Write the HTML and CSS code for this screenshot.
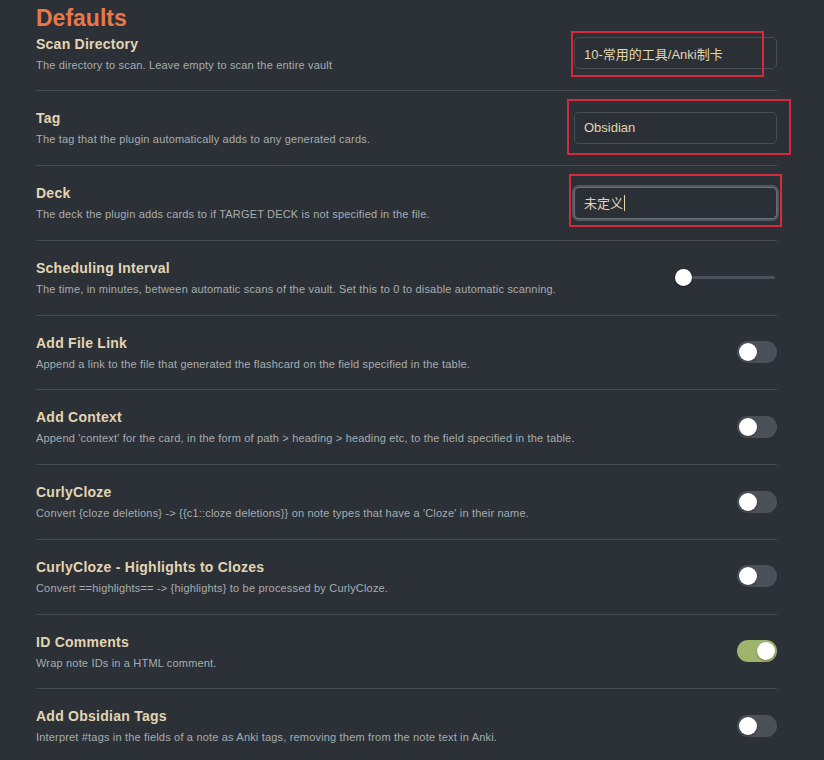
FILE: index.html
```html
<!DOCTYPE html>
<html lang="zh">
<head>
    <meta charset="UTF-8">
    <meta name="viewport" content="width=device-width, initial-scale=1.0">
    <title>Obsidian to Anki - Defaults</title>
    <link rel="stylesheet" href="styles.css">
</head>
<body>
    <div class="settings">
        <h2 class="settings-heading">Defaults</h2>

        <div class="setting-item first">
            <div class="setting-info">
                <div class="setting-name">Scan Directory</div>
                <div class="setting-desc">The directory to scan. Leave empty to scan the entire vault</div>
            </div>
            <div class="setting-control">
                <div class="text-field">10-常用的工具/Anki制卡</div>
                <span class="mark mark-1"></span>
            </div>
        </div>

        <div class="setting-item">
            <div class="setting-info">
                <div class="setting-name">Tag</div>
                <div class="setting-desc">The tag that the plugin automatically adds to any generated cards.</div>
            </div>
            <div class="setting-control">
                <div class="text-field">Obsidian</div>
                <span class="mark mark-2"></span>
            </div>
        </div>

        <div class="setting-item">
            <div class="setting-info">
                <div class="setting-name">Deck</div>
                <div class="setting-desc">The deck the plugin adds cards to if TARGET DECK is not specified in the file.</div>
            </div>
            <div class="setting-control">
                <div class="text-field focused">未定义<span class="caret"></span></div>
                <span class="mark mark-3"></span>
            </div>
        </div>

        <div class="setting-item">
            <div class="setting-info">
                <div class="setting-name">Scheduling Interval</div>
                <div class="setting-desc">The time, in minutes, between automatic scans of the vault. Set this to 0 to disable automatic scanning.</div>
            </div>
            <div class="setting-control">
                <div class="slider"><span class="slider-thumb"></span></div>
            </div>
        </div>

        <div class="setting-item">
            <div class="setting-info">
                <div class="setting-name">Add File Link</div>
                <div class="setting-desc">Append a link to the file that generated the flashcard on the field specified in the table.</div>
            </div>
            <div class="setting-control">
                <div class="toggle"><span class="knob"></span></div>
            </div>
        </div>

        <div class="setting-item">
            <div class="setting-info">
                <div class="setting-name">Add Context</div>
                <div class="setting-desc">Append 'context' for the card, in the form of path &gt; heading &gt; heading etc, to the field specified in the table.</div>
            </div>
            <div class="setting-control">
                <div class="toggle"><span class="knob"></span></div>
            </div>
        </div>

        <div class="setting-item">
            <div class="setting-info">
                <div class="setting-name">CurlyCloze</div>
                <div class="setting-desc">Convert {cloze deletions} -&gt; {{c1::cloze deletions}} on note types that have a 'Cloze' in their name.</div>
            </div>
            <div class="setting-control">
                <div class="toggle"><span class="knob"></span></div>
            </div>
        </div>

        <div class="setting-item">
            <div class="setting-info">
                <div class="setting-name">CurlyCloze - Highlights to Clozes</div>
                <div class="setting-desc">Convert ==highlights== -&gt; {highlights} to be processed by CurlyCloze.</div>
            </div>
            <div class="setting-control">
                <div class="toggle"><span class="knob"></span></div>
            </div>
        </div>

        <div class="setting-item">
            <div class="setting-info">
                <div class="setting-name">ID Comments</div>
                <div class="setting-desc">Wrap note IDs in a HTML comment.</div>
            </div>
            <div class="setting-control">
                <div class="toggle on"><span class="knob"></span></div>
            </div>
        </div>

        <div class="setting-item">
            <div class="setting-info">
                <div class="setting-name">Add Obsidian Tags</div>
                <div class="setting-desc">Interpret #tags in the fields of a note as Anki tags, removing them from the note text in Anki.</div>
            </div>
            <div class="setting-control">
                <div class="toggle"><span class="knob"></span></div>
            </div>
        </div>
    </div>
</body>
</html>
```

FILE: styles.css
```css
body {
    margin: 0;
    background-color: #2c3137;
    font-family: "Liberation Sans", "Noto Sans CJK SC", sans-serif;
}
.settings {
    padding: 0 47px 0 36px;
}
.settings-heading {
    margin: 4px 0 0;
    font-size: 23px;
    line-height: 28px;
    font-weight: bold;
    color: #e8784a;
}
.setting-item {
    display: flex;
    align-items: center;
    justify-content: space-between;
    padding: 17px 0 17.75px;
    border-top: 1px solid #454b52;
}
.setting-item.first {
    padding-top: 1.5px;
    border-top: none;
}
.setting-info {
    flex: 1;
    min-width: 0;
}
.setting-name {
    font-size: 14px;
    line-height: 20px;
    font-weight: bold;
    letter-spacing: 0.25px;
    color: #e3d5b3;
}
.setting-desc {
    margin-top: 4px;
    font-size: 11px;
    line-height: 15px;
    letter-spacing: 0.18px;
    color: #a6adb0;
    white-space: nowrap;
}
.setting-control {
    position: relative;
    display: flex;
    align-items: center;
}
.text-field {
    box-sizing: border-box;
    width: 203px;
    height: 32px;
    padding: 0 9px;
    display: flex;
    align-items: center;
    border: 1px solid #474e55;
    border-radius: 5px;
    background-color: #2b3036;
    font-size: 13px;
    color: #e2d5b2;
    white-space: nowrap;
}
.text-field.focused {
    border-color: #6a727a;
    box-shadow: 0 0 0 2px #4f575f;
}
.caret {
    display: inline-block;
    width: 1px;
    height: 16px;
    margin-left: 1px;
    background-color: #e2d5b2;
}
.mark {
    position: absolute;
    border: 2px solid #d42a3a;
    pointer-events: none;
}
.mark-1 {
    left: -3px;
    top: -6px;
    width: 189px;
    height: 42px;
}
.mark-2 {
    left: -7px;
    top: -13px;
    width: 220px;
    height: 52px;
}
.mark-3 {
    left: -5px;
    top: -13px;
    width: 209px;
    height: 49px;
}
.slider {
    position: relative;
    width: 100px;
    height: 3px;
    margin-right: 2px;
    border-radius: 2px;
    background-color: #4a5159;
}
.slider-thumb {
    position: absolute;
    left: 0;
    top: -7px;
    width: 17px;
    height: 17px;
    border-radius: 50%;
    background-color: #fff;
    box-shadow: 0 1px 2px rgba(0, 0, 0, 0.4);
}
.toggle {
    display: flex;
    align-items: center;
    box-sizing: border-box;
    width: 40px;
    height: 22px;
    padding: 2px;
    border-radius: 11px;
    background-color: #4b5159;
}
.toggle.on {
    justify-content: flex-end;
    background-color: #9db46a;
}
.knob {
    width: 18px;
    height: 18px;
    border-radius: 50%;
    background-color: #fff;
    box-shadow: 0 1px 2px rgba(0, 0, 0, 0.3);
}
```
